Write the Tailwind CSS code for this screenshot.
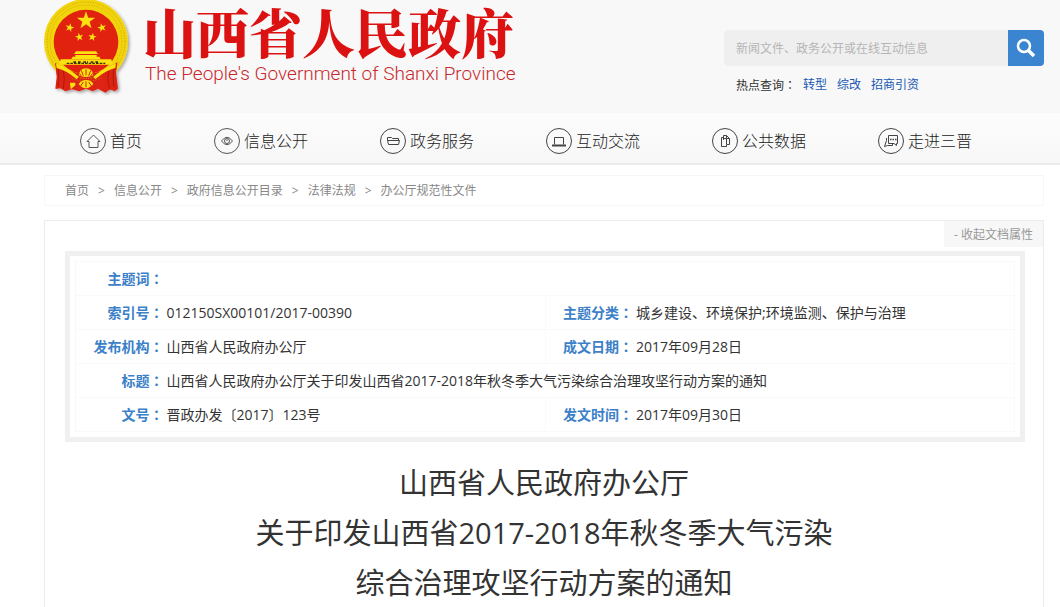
<!DOCTYPE html>
<html lang="zh-CN">
  <head>
    <meta charset="UTF-8" />
    <meta name="viewport" content="width=device-width, initial-scale=1.0" />
    <title>山西省人民政府</title>
    <script src="https://cdn.jsdelivr.net/npm/@tailwindcss/browser@4"></script>
  </head>
  <body class="bg-white text-[#333] font-['Open_Sans','Noto_Sans_CJK_SC',sans-serif]">
    <!-- Header -->
    <header class="bg-[#f8f8f8] h-[113px] pl-11 pr-4 flex justify-between items-start">
      <a href="#" class="flex items-start">
        <svg class="w-[88px] h-[97px]" viewBox="42 0 264 291" aria-hidden="true">
          <defs>
            <filter id="shadow" x="-10%" y="-10%" width="130%" height="130%">
              <feDropShadow dx="5" dy="5" stdDeviation="4" flood-color="#000" flood-opacity="0.35" />
            </filter>
            <path id="star" d="M0-26 6-8 25-8 10 3 15 21 0 10-15 21-10 3-25-8-6-8Z" />
          </defs>
          <g filter="url(#shadow)">
            <ellipse cx="168" cy="125" rx="126" ry="128" fill="#f2d40c" />
            <path d="M76 188 96 206 168 226 240 206 262 186 258 216 264 266 254 274 240 268 226 278 204 266 188 274 168 266 148 274 126 268 106 274 90 264 76 266 80 232Z" fill="#dd2413" />
          </g>
          <ellipse cx="168" cy="125" rx="117" ry="119" fill="none" stroke="#b8950a" stroke-width="2" stroke-dasharray="4 4" />
          <ellipse cx="168" cy="125" rx="108" ry="110" fill="none" stroke="#cfae0a" stroke-width="2" stroke-dasharray="5 3" />
          <circle cx="168" cy="126" r="97" fill="#e0220f" />
          <path d="M76 190Q104 200 124 222L110 270 92 264 78 266 82 230ZM262 188Q234 198 212 222L226 272 246 268 262 264 256 228Z" fill="#dd2413" />
          <path d="M82 200Q90 222 84 260M100 212Q106 236 100 266M254 200Q246 222 252 260M236 212Q230 236 238 266" fill="none" stroke="#a81a0c" stroke-width="3" />
          <g fill="#fbe110">
            <use href="#star" transform="translate(168 62) scale(1.1)" />
            <use href="#star" transform="translate(119 83) rotate(15) scale(.53)" />
            <use href="#star" transform="translate(216 83) rotate(-15) scale(.53)" />
            <use href="#star" transform="translate(148 111) rotate(-10) scale(.5)" />
            <use href="#star" transform="translate(187 111) rotate(10) scale(.5)" />
            <path d="M138 154H198L204 162H132ZM136 165H200V170H136ZM128 170H208L212 177H124ZM92 178H244L248 194H88Z" />
            <path d="M78 190Q120 208 146 230L140 238Q112 212 80 204ZM258 190Q216 208 190 230L196 238Q224 212 256 204Z" />
            <path d="M146 226Q148 206 168 205Q188 206 190 226Q168 236 146 226ZM146 252Q154 240 168 240Q184 240 190 252Q180 264 168 265Q154 264 146 252ZM120 248H136V256L122 268Z" />
          </g>
          <path d="M110 190H226M130 186h8m6 0h8m8 0h14m8 0h8m6 0h8" fill="none" stroke="#3d3108" stroke-width="4" stroke-dasharray="8 3" />
          <path d="M168 226V208M160 227 154 212M176 227 182 212M154 228 148 220M182 228 188 220M168 244V262M160 246 152 258M176 246 184 258" stroke="#d0230f" stroke-width="3" />
        </svg>
        <span class="ml-[11px] block">
          <span class="block text-[53px] leading-[62px] font-black text-[#dc1111] font-['Noto_Serif_CJK_SC','Noto_Sans_CJK_SC',serif]">山西省人民政府</span>
          <span class="block pl-0.5 text-[19px] leading-6 font-light text-[#c8282d] font-['Roboto','Liberation_Sans',sans-serif]">The People's Government of Shanxi Province</span>
        </span>
      </a>

      <div class="w-80 pt-[30px]">
        <form class="flex h-9">
          <input
            type="text"
            aria-label="搜索"
            placeholder="新闻文件、政务公开或在线互动信息"
            class="flex-1 min-w-0 bg-[#efefef] rounded-l px-3 pt-0.5 text-xs placeholder:text-[#b5b5b5]"
          />
          <button type="button" aria-label="搜索" class="w-9 bg-[#3b85d0] rounded-r flex items-center justify-center">
            <svg class="size-5" viewBox="0 0 20 20" fill="none" stroke="#fff" aria-hidden="true">
              <circle cx="8" cy="8" r="6" stroke-width="2.5" />
              <path d="M12.5 12.5 18 18" stroke-width="3.5" />
            </svg>
          </button>
        </form>
        <div class="mt-[9px] pl-3 flex gap-[7px] text-xs leading-5">
          <span>热点查询<span class="font-['Noto_Sans_CJK_TC']" lang="zh-TW">：</span></span>
          <p class="flex gap-[10px] text-[#1757b3]">
            <a href="#">转型</a>
            <a href="#">综改</a>
            <a href="#">招商引资</a>
          </p>
        </div>
      </div>
    </header>

    <!-- Nav -->
    <nav class="bg-linear-to-b from-[#fcfcfc] to-[#f7f7f7] border-b-2 border-[#ececec] pl-11 flex h-[52px] pt-1.5 text-base font-light text-[#222] whitespace-nowrap">
      <a href="#" class="px-9 flex items-center gap-1">
        <svg class="size-[26px]" viewBox="0 0 26 26" fill="none" stroke="#555" aria-hidden="true">
          <circle cx="13" cy="13" r="12.5" />
          <path d="M7 13.5 13.5 7 20 13.5H18V19.5H9V13.5Z" />
        </svg>
        首页
      </a>
      <a href="#" class="px-9 flex items-center gap-1">
        <svg class="size-[26px]" viewBox="0 0 26 26" fill="none" stroke="#555" aria-hidden="true">
          <circle cx="13" cy="13" r="12.5" />
          <path d="M7.5 13Q13 5.5 18.5 13Q13 20.5 7.5 13Z" />
          <circle cx="13" cy="13" r="2.5" />
          <path d="M13 13V11.5" />
        </svg>
        信息公开
      </a>
      <a href="#" class="px-9 flex items-center gap-1">
        <svg class="size-[26px]" viewBox="0 0 26 26" fill="none" stroke="#444" aria-hidden="true">
          <circle cx="13" cy="13" r="12.5" />
          <path d="M8.5 16.5 7.5 12.5H19.5L18.5 16.5ZM7.5 12.5V9.5H11.5L12.5 10.5H18.5V12.5" />
        </svg>
        政务服务
      </a>
      <a href="#" class="px-9 flex items-center gap-1">
        <svg class="size-[26px]" viewBox="0 0 26 26" fill="none" stroke="#444" aria-hidden="true">
          <circle cx="13" cy="13" r="12.5" />
          <path d="M8.5 16.5V9.5H17.5V16.5" />
          <path d="M6 17.5H20" stroke-width="2" />
        </svg>
        互动交流
      </a>
      <a href="#" class="px-9 flex items-center gap-1">
        <svg class="size-[26px]" viewBox="0 0 26 26" fill="none" stroke="#444" aria-hidden="true">
          <circle cx="13" cy="13" r="12.5" />
          <path d="M11.5 9.5H9.5V18.5H14.5V16.5M11.5 7.5H14.5L17.5 10.5V16.5H14.5M11.5 7.5V12M14.5 7.5V10.5H17.5M11 10.5H14.5V16" />
        </svg>
        公共数据
      </a>
      <a href="#" class="px-9 flex items-center gap-1">
        <svg class="size-[26px]" viewBox="0 0 26 26" fill="none" stroke="#444" aria-hidden="true">
          <circle cx="13" cy="13" r="12.5" />
          <path d="M10.5 7.5H19.5V15.5H18.5V17.5L16 15.5H10.5ZM8.5 10V12.5L6.5 18.5 9.5 17.5H14.5V16" />
          <path d="M12 11.5h1.5m1 0h1.5m1 0h1.5" stroke-width="1.5" />
        </svg>
        走进三晋
      </a>
    </nav>

    <main class="pl-11 pr-4">
      <!-- Breadcrumb -->
      <div class="mt-[10px] h-[31px] border border-[#f7f7f7] px-5 flex items-center gap-[9px] text-xs text-[#888]">
        <a href="#">首页</a>
        <span>&gt;</span>
        <a href="#">信息公开</a>
        <span>&gt;</span>
        <a href="#">政府信息公开目录</a>
        <span>&gt;</span>
        <a href="#">法律法规</a>
        <span>&gt;</span>
        <a href="#">办公厅规范性文件</a>
      </div>

      <!-- Document -->
      <article class="mt-[14px] border border-b-0 border-[#ececec] pb-6">
        <div class="flex justify-end">
          <button type="button" class="h-[26px] px-[10px] pt-0.5 bg-[#f7f7f7] text-xs text-[#999]">- 收起文档属性</button>
        </div>

        <div class="ml-5 mr-[18px] mt-1 border-5 border-[#f0f0f0] p-[5px]">
          <table class="w-full table-fixed border-collapse text-sm leading-5">
            <colgroup>
              <col class="w-[90px]" />
              <col />
              <col class="w-[90px]" />
              <col />
            </colgroup>
            <tbody>
              <tr class="h-[34px] border border-[#f9f9f9]">
                <th scope="row" class="pr-0.5 text-right font-bold text-[#3b80c8]">主题词<span class="font-['Noto_Sans_CJK_TC']" lang="zh-TW">：</span></th>
                <td colspan="3"></td>
              </tr>
              <tr class="h-[34px] border border-[#f9f9f9]">
                <th scope="row" class="pr-0.5 text-right font-bold text-[#3b80c8]">索引号<span class="font-['Noto_Sans_CJK_TC']" lang="zh-TW">：</span></th>
                <td class="pl-px">012150SX00101/2017-00390</td>
                <th scope="row" class="border-l border-[#f9f9f9] pr-0.5 text-right font-bold text-[#3b80c8]">主题分类<span class="font-['Noto_Sans_CJK_TC']" lang="zh-TW">：</span></th>
                <td class="pl-px">城乡建设、环境保护;环境监测、保护与治理</td>
              </tr>
              <tr class="h-[34px] border border-[#f9f9f9]">
                <th scope="row" class="pr-0.5 text-right font-bold text-[#3b80c8]">发布机构<span class="font-['Noto_Sans_CJK_TC']" lang="zh-TW">：</span></th>
                <td class="pl-px">山西省人民政府办公厅</td>
                <th scope="row" class="border-l border-[#f9f9f9] pr-0.5 text-right font-bold text-[#3b80c8]">成文日期<span class="font-['Noto_Sans_CJK_TC']" lang="zh-TW">：</span></th>
                <td class="pl-px">2017年09月28日</td>
              </tr>
              <tr class="h-[34px] border border-[#f9f9f9]">
                <th scope="row" class="pr-0.5 text-right font-bold text-[#3b80c8]">标题<span class="font-['Noto_Sans_CJK_TC']" lang="zh-TW">：</span></th>
                <td colspan="3" class="pl-px">山西省人民政府办公厅关于印发山西省2017-2018年秋冬季大气污染综合治理攻坚行动方案的通知</td>
              </tr>
              <tr class="h-[34px] border border-[#f9f9f9]">
                <th scope="row" class="pr-0.5 text-right font-bold text-[#3b80c8]">文号<span class="font-['Noto_Sans_CJK_TC']" lang="zh-TW">：</span></th>
                <td class="pl-px">晋政办发〔2017〕123号</td>
                <th scope="row" class="border-l border-[#f9f9f9] pr-0.5 text-right font-bold text-[#3b80c8]">发文时间<span class="font-['Noto_Sans_CJK_TC']" lang="zh-TW">：</span></th>
                <td class="pl-px">2017年09月30日</td>
              </tr>
            </tbody>
          </table>
        </div>

        <h1 class="mt-4 text-center text-[29px] leading-[50px]">
          山西省人民政府办公厅<br />
          关于印发山西省2017-2018年秋冬季大气污染<br />
          综合治理攻坚行动方案的通知
        </h1>
      </article>
    </main>
  </body>
</html>
